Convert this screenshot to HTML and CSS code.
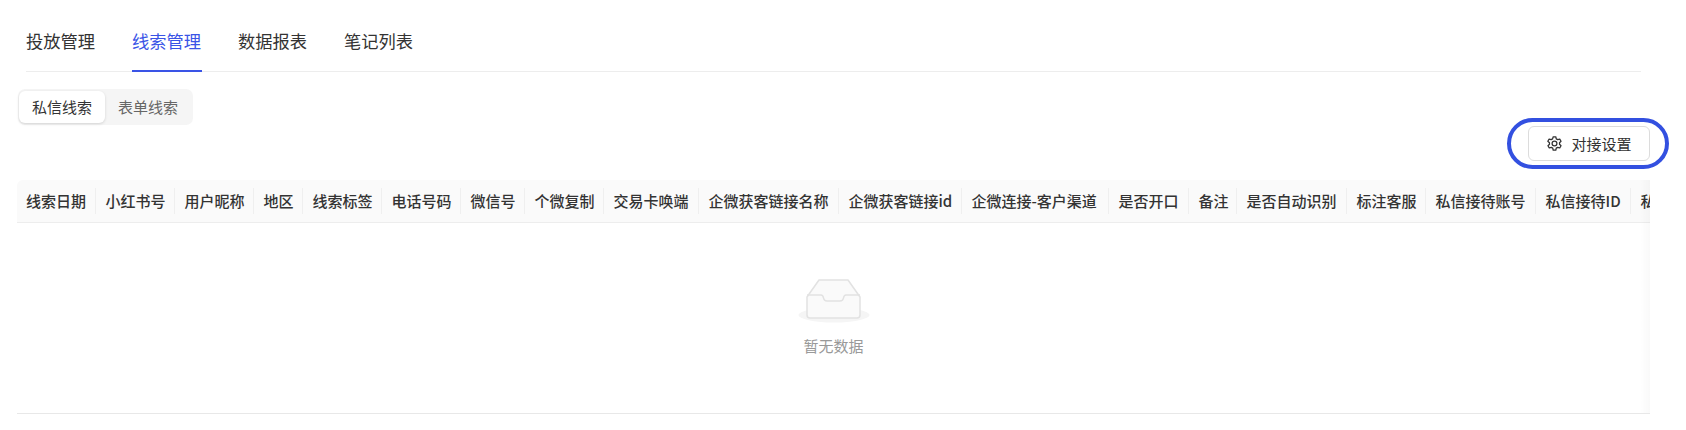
FILE: index.html
```html
<!DOCTYPE html>
<html lang="zh-CN">
<head>
    <meta charset="UTF-8">
    <meta name="viewport" content="width=device-width, initial-scale=1.0">
    <title>线索管理</title>
    <link rel="stylesheet" href="styles.css">
</head>
<body>
    <div class="tabs">
        <div class="tab">投放管理</div>
        <div class="tab active">线索管理</div>
        <div class="tab">数据报表</div>
        <div class="tab">笔记列表</div>
    </div>

    <div class="segment">
        <div class="segment-item selected">私信线索</div>
        <div class="segment-item">表单线索</div>
    </div>

    <div class="toolbar">
        <div class="button-wrap">
            <button class="setting-button">
                <svg class="gear" viewBox="0 0 24 24" fill="none" stroke="currentColor" stroke-width="1.8" stroke-linejoin="round">
                    <path d="M10.2 2.5h3.6l.7 2.9 2 1.1 2.9-.8 1.8 3.1-2.1 2.1v2.2l2.1 2.1-1.8 3.1-2.9-.8-2 1.1-.7 2.9h-3.6l-.7-2.9-2-1.1-2.9.8-1.8-3.1 2.1-2.1v-2.2L2.6 8.8l1.8-3.1 2.9.8 2-1.1z"/>
                    <circle cx="12" cy="12" r="3.4"/>
                </svg>
                <span>对接设置</span>
            </button>
            <div class="ring"></div>
        </div>
    </div>

    <div class="table">
        <div class="table-head">
            <div class="cell">线索日期</div>
            <div class="cell">小红书号</div>
            <div class="cell">用户昵称</div>
            <div class="cell">地区</div>
            <div class="cell">线索标签</div>
            <div class="cell">电话号码</div>
            <div class="cell">微信号</div>
            <div class="cell">个微复制</div>
            <div class="cell">交易卡唤端</div>
            <div class="cell">企微获客链接名称</div>
            <div class="cell">企微获客链接id</div>
            <div class="cell">企微连接-客户渠道</div>
            <div class="cell">是否开口</div>
            <div class="cell">备注</div>
            <div class="cell">是否自动识别</div>
            <div class="cell">标注客服</div>
            <div class="cell">私信接待账号</div>
            <div class="cell">私信接待ID</div>
            <div class="cell">私信接待昵称</div>
        </div>
        <div class="empty">
            <svg class="empty-icon" viewBox="0 0 72 46" fill="none">
                <ellipse cx="36" cy="37" rx="35.5" ry="7.5" fill="#f5f5f5"/>
                <path d="M9 19 L21 2 H50 L62 19 V37 Q62 40 59 40 H12 Q9 40 9 37 Z" fill="#fafafa" stroke="#e2e2e2" stroke-width="1.5" stroke-linejoin="round"/>
                <path d="M9 17 H23 Q25 17 25.5 20 Q26 23 29 23 H42 Q45 23 45.5 20 Q46 17 48 17 H62" fill="none" stroke="#e2e2e2" stroke-width="1.5"/>
            </svg>
            <div class="empty-text">暂无数据</div>
        </div>
        <div class="edge-shadow"></div>
    </div>
</body>
</html>
```

FILE: styles.css
```css
* {
    box-sizing: border-box;
}
body {
    margin: 0;
    background: #fff;
    font-family: "Noto Sans CJK SC", "Liberation Sans", sans-serif;
    color: #333;
}
.tabs {
    display: flex;
    gap: 36px;
    margin: 0 45px 0 26px;
    height: 72px;
    border-bottom: 1px solid #ededed;
}
.tab {
    height: 72px;
    padding-top: 29px;
    width: 70px;
    font-size: 17.25px;
    line-height: 24px;
    white-space: nowrap;
    color: #333;
}
.tab.active {
    color: #3a54e6;
    border-bottom: 2px solid #3a54e6;
}
.segment {
    display: inline-flex;
    margin: 17px 0 0 18px;
    padding: 2px 0 2px 1px;
    width: 175px;
    height: 36px;
    background: #f5f5f5;
    border-radius: 7px;
    vertical-align: top;
}
.segment-item {
    width: 86px;
    font-size: 15px;
    line-height: 32px;
    text-align: center;
    color: #666;
}
.segment-item.selected {
    background: #fff;
    color: #333;
    border-radius: 6px;
    box-shadow: 0 1px 3px rgba(0,0,0,0.14);
}
.toolbar {
    display: flex;
    justify-content: flex-end;
    padding-right: 36px;
    margin-top: 1px;
}
.button-wrap {
    position: relative;
}
.setting-button {
    display: flex;
    align-items: center;
    justify-content: center;
    gap: 8px;
    width: 122px;
    height: 35px;
    padding: 0;
    background: #fff;
    border: 1px solid #dcdcdc;
    border-radius: 6px;
    font-family: inherit;
    font-size: 15px;
    color: #333;
}
.gear {
    width: 17px;
    height: 17px;
}
.ring {
    position: absolute;
    top: -8px;
    right: -19px;
    bottom: -8px;
    left: -21px;
    border: 4px solid #3350e0;
    border-radius: 26px;
}
.table {
    position: relative;
    margin: 19px 36px 0 17px;
    height: 234px;
    border-bottom: 1px solid #e8e8e8;
    overflow: hidden;
}
.table-head {
    display: grid;
    grid-template-columns: 79px 79px 79px 49px 79px 79px 64px 79px 95px 140px 123px 147px 80px 48px 110px 79px 110px 95px 100px;
    align-items: center;
    height: 43px;
    background: #fafafa;
    border-bottom: 1px solid #ededed;
    border-radius: 6px 0 0 0;
}
.cell {
    padding-left: 9.5px;
    font-size: 15px;
    font-weight: 500;
    line-height: 26px;
    white-space: nowrap;
    color: #333;
    border-right: 1px solid #efefef;
}
.cell:first-child {
    padding-left: 9px;
}
.empty {
    display: flex;
    flex-direction: column;
    align-items: center;
    padding-top: 55px;
}
.empty-icon {
    display: block;
    width: 72px;
    height: 46px;
}
.empty-text {
    margin-top: 11px;
    font-size: 15px;
    line-height: 22px;
    color: #999;
}
.edge-shadow {
    position: absolute;
    top: 0;
    right: 0;
    bottom: 0;
    width: 10px;
    background: linear-gradient(to right, rgba(0,0,0,0), rgba(0,0,0,0.025));
}
```
